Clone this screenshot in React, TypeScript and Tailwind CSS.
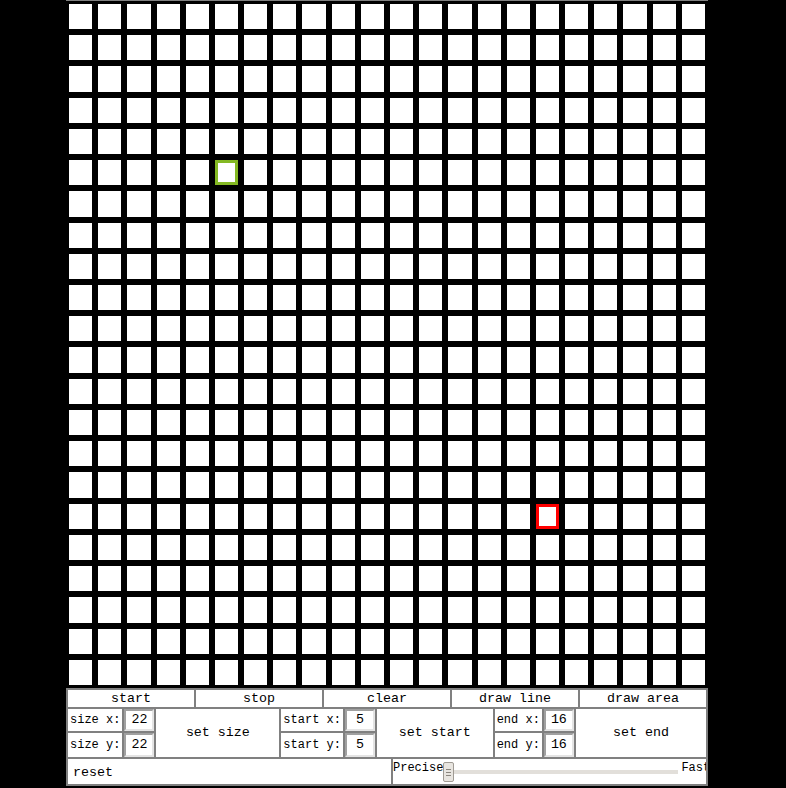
import React from 'react';

const SIZE = 22;
const START = { x: 5, y: 5 };
const END = { x: 16, y: 16 };

const mono = { fontFamily: '"Liberation Mono", "Courier New", monospace' };

function Cell({ kind }: { kind: 'start' | 'end' | 'empty' }) {
  return (
    <div className="border-[3px] border-black bg-white">
      {kind === 'start' && <div className="h-full w-full border-[3px] border-[#84b923]" />}
      {kind === 'end' && <div className="h-full w-full border-[3px] border-[#ff0000]" />}
    </div>
  );
}

function Field({ label, value, last }: { label: string; value: string; last?: boolean }) {
  return (
    <div className={`flex h-[24px] ${last ? '' : 'border-b-2 border-[#808080]'}`}>
      <div className="flex items-center border-r-2 border-[#808080] px-[2px] text-[12px]">{label}</div>
      <div className="flex w-[30px] items-center justify-center border-2 border-t-[#a0a0a0] border-l-[#a0a0a0] border-r-[#e4e4e4] border-b-[#e4e4e4] text-[13.33px]">
        {value}
      </div>
    </div>
  );
}

function Group({ a, b, button, first }: { a: [string, string]; b: [string, string]; button: string; first?: boolean }) {
  return (
    <div className={`flex flex-1 ${first ? '' : 'border-l-2 border-[#808080]'}`}>
      <div className="flex flex-col border-r-2 border-[#808080]">
        <Field label={a[0]} value={a[1]} />
        <Field label={b[0]} value={b[1]} last />
      </div>
      <div className="flex flex-1 items-center justify-center text-[13.33px]">{button}</div>
    </div>
  );
}

export default function App() {
  const cells = Array.from({ length: SIZE * SIZE }, (_, i) => {
    const x = i % SIZE;
    const y = Math.floor(i / SIZE);
    const kind = x === START.x && y === START.y ? 'start' : x === END.x && y === END.y ? 'end' : 'empty';
    return <Cell key={i} kind={kind} />;
  });

  return (
    <div className="min-h-screen bg-black">
      <div className="ml-[66px] w-[642px]">
        <div className="h-px bg-[#808080]" />
        <div className="grid h-[687px] grid-cols-[repeat(22,minmax(0,1fr))] grid-rows-[repeat(22,minmax(0,1fr))]">
          {cells}
        </div>

        {/* Controls */}
        <div className="border-2 border-[#808080] bg-white text-black" style={mono}>
          <div className="flex h-[19px] border-b-2 border-[#808080] text-[13.33px]">
            {['start', 'stop', 'clear', 'draw line', 'draw area'].map((t, i) => (
              <div
                key={t}
                className={`flex flex-1 items-center justify-center ${i ? 'border-l-2 border-[#808080]' : ''}`}
              >
                {t}
              </div>
            ))}
          </div>
          <div className="flex h-[50px] border-b-2 border-[#808080]">
            <Group first a={['size x:', '22']} b={['size y:', '22']} button="set size" />
            <Group a={['start x:', '5']} b={['start y:', '5']} button="set start" />
            <Group a={['end x:', '16']} b={['end y:', '16']} button="set end" />
          </div>
          <div className="flex h-[25px]">
            <div className="flex w-[325px] items-center border-r-2 border-[#808080] pl-[5px] pt-[3px] text-[13.33px]">reset</div>
            <div className="flex flex-1 items-start overflow-hidden pt-[2px] text-[12px] leading-[14px]">
              <span className="shrink-0">Precise</span>
              <div className="mt-px flex h-[20px] w-[11px] shrink-0 flex-col items-center justify-center gap-[2px] rounded-[2px] border border-[#a09b94] bg-[#e8e5e0]">
                <span className="h-px w-[5px] bg-[#8a857e]" />
                <span className="h-px w-[5px] bg-[#8a857e]" />
                <span className="h-px w-[5px] bg-[#8a857e]" />
              </div>
              <div className="mt-[9px] h-[4px] w-[224px] shrink-0 bg-[#e2dfda]" />
              <span className="ml-[3px] shrink-0">Fast</span>
            </div>
          </div>
        </div>
      </div>
    </div>
  );
}
